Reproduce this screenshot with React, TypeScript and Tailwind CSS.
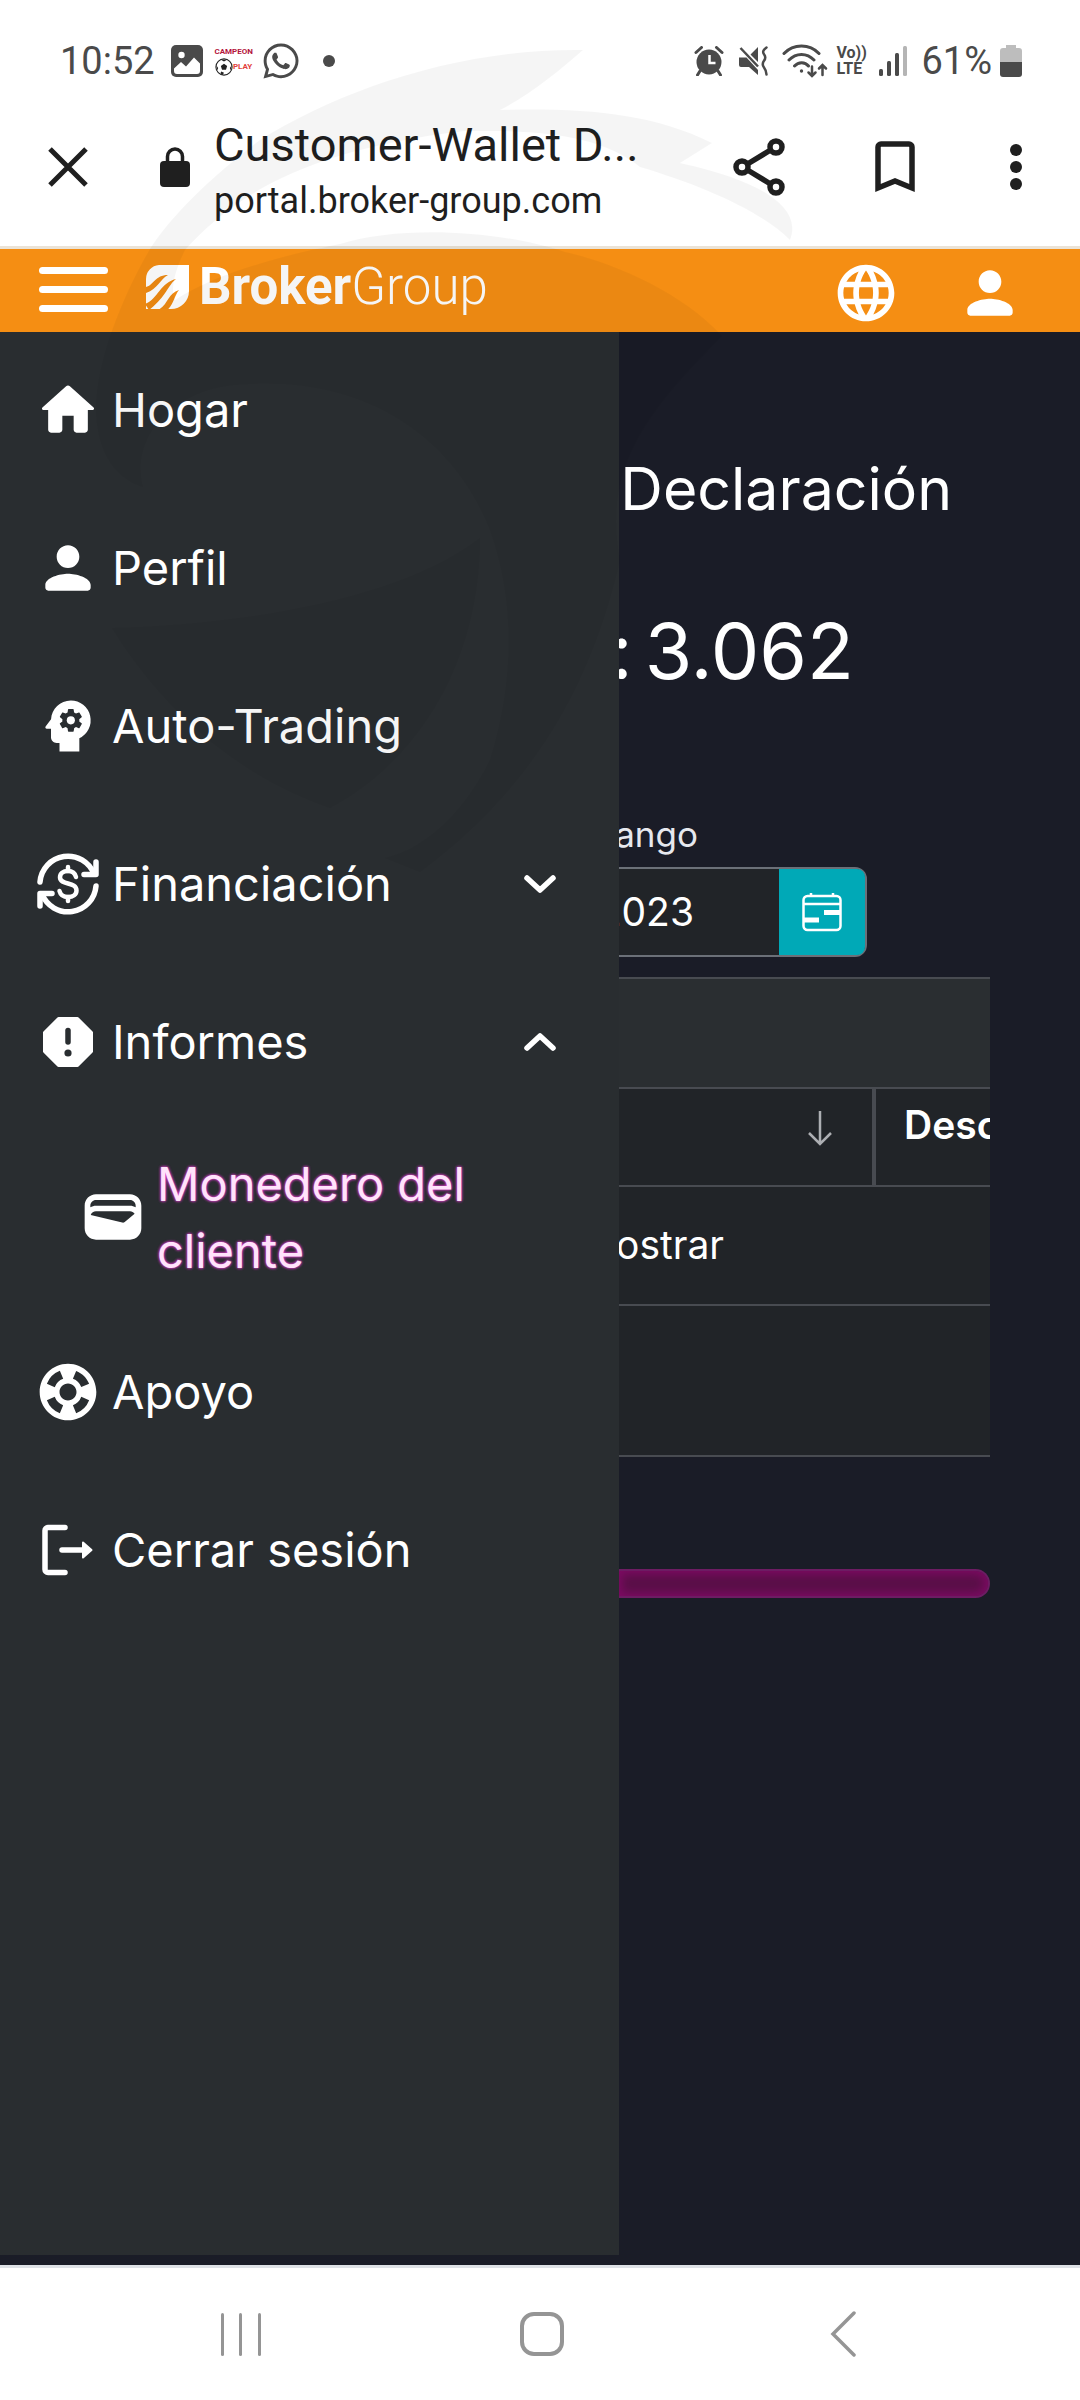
import { useState } from 'react'
import { FaWhatsapp } from 'react-icons/fa'
import { MdLanguage, MdPsychology, MdSupport, MdWallet } from 'react-icons/md'

type IconProps = { className?: string }

function HomeIcon({ className }: IconProps) {
  return (
    <svg viewBox="0 0 24 24" fill="currentColor" className={className}>
      <path d="M10 19v-5h4v5c0 .55.45 1 1 1h3c.55 0 1-.45 1-1v-7h1.7c.46 0 .68-.57.33-.87L12.67 3.6c-.38-.34-.96-.34-1.34 0l-8.36 7.53c-.34.3-.13.87.33.87H5v7c0 .55.45 1 1 1h3c.55 0 1-.45 1-1z" />
    </svg>
  )
}

function PersonIcon({ className }: IconProps) {
  return (
    <svg viewBox="0 0 24 24" fill="currentColor" className={className}>
      <path d="M12 12c2.21 0 4-1.79 4-4s-1.79-4-4-4-4 1.79-4 4 1.79 4 4 4zm0 2c-2.67 0-8 1.34-8 4v1c0 .55.45 1 1 1h14c.55 0 1-.45 1-1v-1c0-2.66-5.33-4-8-4z" />
    </svg>
  )
}

function FundingIcon({ className }: IconProps) {
  return (
    <svg viewBox="0 0 68 68" fill="none" stroke="currentColor" strokeWidth="5.5" strokeLinecap="round" strokeLinejoin="round" className={className}>
      <path d="M6 32A28 28 0 0 1 60 24" />
      <path d="M62 12v12.500H50" />
      <path d="M62 36A28 28 0 0 1 8 44" />
      <path d="M6 56V43.500H18" />
      <path d="M42 27c-1-4-4-6-8-6-5 0-8 2.500-8 6.300C26 36 42.500 31 42.500 40.500c0 4-3.500 6.500-8.500 6.500-4.500 0-7.500-2-8.500-6" strokeWidth="4.500" />
      <path d="M34 17v4M34 47v4" strokeWidth="4.500" />
    </svg>
  )
}

function ReportIcon({ className }: IconProps) {
  return (
    <svg viewBox="0 0 68 68" className={className}>
      <path d="M24.500 10.500h19L57.500 24.500v19L43.500 57.500h-19L10.500 43.500v-19z" fill="currentColor" stroke="currentColor" strokeWidth="3" strokeLinejoin="round" />
      <path d="M34 22.500v11.500" stroke="#292d30" strokeWidth="5.500" strokeLinecap="round" />
      <circle cx="34" cy="45" r="3.600" fill="#292d30" />
    </svg>
  )
}

function LogoutIcon({ className }: IconProps) {
  return (
    <svg viewBox="0 0 68 68" fill="none" stroke="currentColor" strokeWidth="5.500" strokeLinecap="round" strokeLinejoin="round" className={className}>
      <path d="M31 11.500H14a3 3 0 0 0-3 3v39a3 3 0 0 0 3 3h17" />
      <path d="M28 34h22" />
      <path d="M49 26.500 57.500 34 49 41.500z" fill="currentColor" strokeWidth="2" />
    </svg>
  )
}

function Chevron({ up }: { up: boolean }) {
  return (
    <svg viewBox="0 0 34 20" fill="none" stroke="currentColor" strokeWidth="5.500" strokeLinecap="round" strokeLinejoin="round" className="h-5 w-[34px]">
      <path d={up ? 'M4 16 17 4l13 12' : 'M4 4l13 12L30 4'} />
    </svg>
  )
}

function StatusBar() {
  return (
    <div className="flex h-[110px] items-center justify-between bg-white pt-3 pl-[60px] pr-[58px] text-[#4a4a4a]">
      <div className="flex items-center">
        <span className="text-[38px] leading-10">10:52</span>
        <svg viewBox="0 0 32 32" className="ml-4 size-8">
          <rect width="32" height="32" rx="5" fill="#4a4a4a" />
          <path d="M3 23.500 10 17l5 4.500 8-9 6 6V26a3 3 0 0 1-3 3H6a3 3 0 0 1-3-3z" fill="#fff" />
          <circle cx="10.500" cy="10" r="3.200" fill="#fff" />
        </svg>
        <div className="ml-3 flex w-[38px] flex-col items-center text-[8px] leading-3 font-bold">
          <span className="text-[#b3143c]">CAMPEON</span>
          <div className="flex items-center">
            <svg viewBox="0 0 20 20" className="size-[18px] shrink-0">
              <circle cx="10" cy="10" r="9" fill="#fff" stroke="#222" strokeWidth="1.200" />
              <path d="M10 6.500 13.500 9l-1.300 4H7.800L6.500 9zM6.500 2 10 4l3.500-2zM1.500 8 3.500 11 2.500 14zM18.500 8 16.500 11l1 3zM6 17l1-2 3 1.500L8.500 19z" fill="#222" />
            </svg>
            <span className="text-[#e2413c]">PLAY</span>
          </div>
        </div>
        <FaWhatsapp className="ml-2 size-10" />
        <span className="ml-[22px] size-3 rounded-full bg-[#4a4a4a]" />
      </div>

      <div className="flex items-center">
        <svg viewBox="0 0 30 30" className="size-[30px]">
          <circle cx="15" cy="16" r="12.500" fill="#4a4a4a" />
          <path d="M2 6.500 7.500 1.500M28 6.500 22.500 1.500M6 25l-2.500 4M24 25l2.500 4" stroke="#4a4a4a" strokeWidth="3" strokeLinecap="round" />
          <path d="M15.500 9v8h6" fill="none" stroke="#fff" strokeWidth="2.500" />
        </svg>
        <svg viewBox="0 0 30 30" className="ml-[14px] size-[30px]" fill="#4a4a4a">
          <path d="M20 1v15L12.500 8.500zM1 11.500h7.500L20 24v5l-9-8H3a2 2 0 0 1-2-2z" />
          <path d="M2.500 2 20 20.500" stroke="#4a4a4a" strokeWidth="2.500" />
          <path d="M28.500 1.500q-5 3.500-2.500 6.700t0 6.600 0 6.600 2.500 7.100" fill="none" stroke="#4a4a4a" strokeWidth="2.500" strokeLinecap="round" />
        </svg>
        <svg viewBox="0 0 46 34" fill="none" stroke="#4a4a4a" strokeWidth="3" strokeLinecap="round" className="ml-[14px] h-[34px] w-[46px]">
          <path d="M2 9.500c9.500-10 25.500-10 35 0M7 16c7-7.500 18-7.500 25 0M12.500 22c4-4.500 10.500-4.500 14 0" />
          <circle cx="19.500" cy="27" r="1.700" fill="#4a4a4a" stroke="none" />
          <path d="M30 22.500v9M26.500 28.500l3.500 3.500 3.500-3.500M40.500 31v-9M37 24.500l3.500-3.500 3.500 3.500" strokeWidth="2.500" />
        </svg>
        <div className="ml-2 flex w-[30px] flex-col text-[16px] leading-4 font-bold">
          <span>Vo))</span>
          <span>LTE</span>
        </div>
        <svg viewBox="0 0 28 30" className="ml-[13px] h-[30px] w-7" fill="#4a4a4a">
          <rect x="0" y="23" width="4" height="7" rx="1.500" />
          <rect x="8" y="15" width="4" height="15" rx="1.500" />
          <rect x="16" y="7" width="4" height="23" rx="1.500" />
          <rect x="24" y="0" width="4" height="30" rx="1.500" fill="#b5b5b5" />
        </svg>
        <span className="ml-[14px] text-[38px] leading-10">61%</span>
        <svg viewBox="0 0 22 32" className="ml-2 h-8 w-[22px]">
          <path d="M6 0h10v3h3a3 3 0 0 1 3 3v11H0V6a3 3 0 0 1 3-3h3z" fill="#bdbdbd" />
          <path d="M0 17h22v12a3 3 0 0 1-3 3H3a3 3 0 0 1-3-3z" fill="#4a4a4a" />
        </svg>
      </div>
    </div>
  )
}

function BrowserBar() {
  return (
    <div className="flex h-[139px] items-center border-b-[3px] border-[#ebe3d6] bg-white pb-[22px] pl-12 pr-[58px] text-[#1f1f1f]">
      <button aria-label="Cerrar">
        <svg viewBox="0 0 40 40" className="size-10" stroke="currentColor" strokeWidth="5">
          <path d="M2 2 38 38M38 2 2 38" />
        </svg>
      </button>
      <svg viewBox="0 0 30 40" className="ml-[72px] h-10 w-[30px]">
        <rect y="14" width="30" height="26" rx="4" fill="currentColor" />
        <path d="M7.500 15V9.500a7.500 7.500 0 0 1 15 0V15" fill="none" stroke="currentColor" strokeWidth="3.500" />
      </svg>
      <div className="ml-6 flex flex-1 flex-col gap-[6px] pt-[6px] whitespace-nowrap">
        <span className="text-[47px] leading-14">Customer-Wallet D...</span>
        <span className="text-[36px] leading-11">portal.broker-group.com</span>
      </div>
      <button aria-label="Compartir">
        <svg viewBox="0 0 52 58" fill="none" stroke="currentColor" strokeWidth="5.500" className="h-[58px] w-[52px]">
          <circle cx="43" cy="9" r="6" />
          <circle cx="9" cy="29" r="6" />
          <circle cx="43" cy="49" r="6" />
          <path d="M14.500 26 37.500 12M14.500 32 37.500 46" />
        </svg>
      </button>
      <button aria-label="Marcador" className="ml-[90px]">
        <svg viewBox="0 0 40 52" fill="none" stroke="currentColor" strokeWidth="5.500" className="h-[52px] w-10">
          <path d="M3 47V6a3 3 0 0 1 3-3h28a3 3 0 0 1 3 3v41L20 40z" />
        </svg>
      </button>
      <button aria-label="Más opciones" className="ml-[95px] flex flex-col gap-[5px]">
        <span className="size-3 rounded-full bg-current" />
        <span className="size-3 rounded-full bg-current" />
        <span className="size-3 rounded-full bg-current" />
      </button>
    </div>
  )
}

function Header({ onToggle }: { onToggle: () => void }) {
  return (
    <header className="flex h-[83px] items-center bg-[#f58e13] pl-[39px] pr-14 text-white">
      <button aria-label="Menú" onClick={onToggle} className="flex w-[69px] flex-col gap-3 pb-[2px]">
        <span className="h-[7px] rounded-full bg-white" />
        <span className="h-[7px] rounded-full bg-white" />
        <span className="h-[7px] rounded-full bg-white" />
      </button>
      <a href="#" className="ml-[38px] flex items-center pb-2">
        <svg viewBox="0 0 43 44" className="h-11 w-[43px]">
          <path d="M13 0h30v26a18 18 0 0 1-18 18H0V14A14 14 0 0 1 13 0z" fill="#fff" />
          <path d="M0 22C8 20 9 10 22 10 14 14 12 24 0 28zM-1 39C12 34 14 18 30 14 22 20 20 32 3 45zM12 45C22 40 22 28 33 25 28 31 28 40 20 46z" fill="#f08b13" />
        </svg>
        <span className="ml-[10px] text-[51px] leading-14 font-bold">
          Broker<span className="font-light">Group</span>
        </span>
      </a>
      <div className="ml-auto flex items-center gap-14 pt-[5px]">
        <button aria-label="Idioma">
          <MdLanguage className="size-[68px]" />
        </button>
        <button aria-label="Cuenta">
          <PersonIcon className="size-[68px]" />
        </button>
      </div>
    </header>
  )
}

const menu = [
  { label: 'Hogar', icon: HomeIcon },
  { label: 'Perfil', icon: PersonIcon },
  { label: 'Auto-Trading', icon: MdPsychology },
  { label: 'Financiación', icon: FundingIcon, group: true },
  { label: 'Informes', icon: ReportIcon, group: true, children: [{ label: 'Monedero del cliente', icon: MdWallet }] },
  { label: 'Apoyo', icon: MdSupport },
  { label: 'Cerrar sesión', icon: LogoutIcon },
]

function Sidebar() {
  const [expanded, setExpanded] = useState('Informes')

  return (
    <aside className="w-[619px] shrink-0 bg-[#292d30] text-white">
      <nav className="flex flex-col text-[47px] leading-[67px]">
        {menu.map(({ label, icon: Icon, group, children }) => (
          <div key={label}>
            {group ? (
              <button
                onClick={() => setExpanded(expanded === label ? '' : label)}
                className="flex h-[158px] w-full items-center pb-[3px] pl-[34px] pr-[62px]"
              >
                <Icon className="size-[68px]" />
                <span className="ml-[10px]">{label}</span>
                <span className="ml-auto">
                  <Chevron up={expanded === label} />
                </span>
              </button>
            ) : (
              <a href="#" className="flex h-[158px] items-center pb-[3px] pl-[34px]">
                <Icon className="size-[68px]" />
                <span className="ml-[10px]">{label}</span>
              </a>
            )}
            {expanded === label &&
              children?.map(({ label: childLabel, icon: ChildIcon }) => (
                <a key={childLabel} href="#" className="flex h-[192px] items-center pb-[3px] pl-[79px] pr-28">
                  <ChildIcon className="size-[68px] shrink-0" />
                  <span className="ml-[10px] text-[#ffe3fb] [text-shadow:0_0_3px_#e23fd0,0_0_3px_#c531b6]">{childLabel}</span>
                </a>
              ))}
          </div>
        ))}
      </nav>
    </aside>
  )
}

function WalletStatement() {
  return (
    <main className="min-w-0 flex-1 overflow-hidden pt-[117px] pr-[90px] text-white">
      <h1 className="flex justify-end pr-[38px] text-[59px] leading-[80px]">Declaración</h1>
      <p className="mt-20 flex justify-end gap-3 pr-[136px] text-[77px] leading-[84px] whitespace-nowrap">
        <span>:</span>
        <span>3.062</span>
      </p>

      <div className="mt-[113px] flex flex-col items-end pr-[123px]">
        <label htmlFor="range" className="pr-[169px] text-[35px] leading-[56px] text-[#e6e8ee]">
          Rango
        </label>
        <div className="mt-[5px] flex h-[90px] w-[420px] rounded-r-xl border-2 border-[#6b7078]">
          <input
            id="range"
            defaultValue="01/01/2023"
            className="min-w-0 flex-1 bg-[#212428] pr-[85px] text-right text-[39px] outline-none"
          />
          <button aria-label="Abrir calendario" className="flex w-[86px] items-center justify-center rounded-r-lg bg-[#00a9b7]">
            <svg viewBox="0 0 40 40" fill="none" stroke="#fff" strokeWidth="2.500" className="size-10">
              <rect x="1.500" y="4" width="37" height="34" rx="4" />
              <path d="M1.500 12h37M9 1v4M31 1v4" />
              <path d="M22 20.500h16M2 28h15" strokeWidth="5" />
            </svg>
          </button>
        </div>
      </div>

      <section className="mt-5 overflow-hidden border-y-2 border-[#484b51]">
        <div className="h-[108px] bg-[#2a2e31]" />
        <table className="w-[560px] table-fixed border-collapse bg-[#212428] text-left text-[39px]">
          <thead>
            <tr className="h-[98px] border-y-2 border-[#484b51] align-top">
              <th className="w-[255px] border-r-4 border-[#484b51]">
                <svg viewBox="0 0 24 36" fill="none" stroke="#adafb3" strokeWidth="2.500" className="mt-[21px] mr-10 ml-auto h-9 w-6">
                  <path d="M12 1v33M1 23l11 11 11-11" />
                </svg>
              </th>
              <th className="overflow-hidden pt-[6px] pl-7 leading-[60px] font-semibold">Descripción</th>
            </tr>
          </thead>
          <tbody>
            <tr className="h-[119px] border-b-2 border-[#484b51]">
              <td colSpan={2}>
                <span className="flex w-[105px] justify-end">mostrar</span>
              </td>
            </tr>
          </tbody>
        </table>
        <div className="h-[149px] bg-[#212428]" />
      </section>

      <div className="mt-28 h-[29px] rounded-r-full border-2 border-l-0 border-[#6d1c63] bg-[#5a0f48] shadow-[inset_0_0_10px_3px_#7d0a63]" />
    </main>
  )
}

function NavigationBar() {
  return (
    <div className="grid h-[135px] grid-cols-3 items-center justify-items-center border-t-[3px] border-[#dde1e6] bg-white pr-[86px] pl-[90px]">
      <button aria-label="Recientes" className="flex w-10 justify-between">
        <span className="h-[43px] w-[3px] rounded-full bg-[#959595]" />
        <span className="h-[43px] w-[3px] rounded-full bg-[#959595]" />
        <span className="h-[43px] w-[3px] rounded-full bg-[#959595]" />
      </button>
      <button aria-label="Inicio" className="size-11 rounded-[14px] border-4 border-[#959595]" />
      <button aria-label="Atrás">
        <svg viewBox="0 0 26 46" fill="none" stroke="#959595" strokeWidth="3.500" strokeLinecap="round" className="h-[46px] w-[26px]">
          <path d="M24 2 3 23l21 21" />
        </svg>
      </button>
    </div>
  )
}

function Watermark() {
  return (
    <svg viewBox="0 0 1080 1000" fill="#000" fillOpacity="0.04" className="pointer-events-none absolute inset-x-0 top-0 w-full">
      <path d="M583 50C460 48 340 90 260 140 200 185 165 225 150 249 120 300 88 380 98 430 103 460 120 480 143 487 130 440 170 385 250 384 370 378 455 440 490 530 515 600 515 680 490 760 460 820 420 850 385 858L420 872C530 790 590 690 620 560 600 460 660 400 722 336 680 290 610 262 565 252 500 230 400 225 340 244 300 252 220 270 175 300 170 290 175 270 185 250 230 200 300 150 465 131 540 130 600 135 640 167 700 185 760 210 790 240 800 215 780 185 680 163L712 143C650 112 580 108 500 110 530 95 560 70 583 50z" />
      <path d="M480 538C400 600 240 625 112 628 150 690 220 770 330 808 420 760 480 660 480 538z" />
    </svg>
  )
}

export default function App() {
  const [menuOpen, setMenuOpen] = useState(true)

  return (
    <div className="relative flex min-h-screen flex-col bg-[#1a1c27] font-['Roboto',sans-serif]">
      <StatusBar />
      <BrowserBar />
      <Header onToggle={() => setMenuOpen(!menuOpen)} />
      <div className="flex flex-1 pb-[10px] font-['Inter',sans-serif]">
        {menuOpen && <Sidebar />}
        <WalletStatement />
      </div>
      <NavigationBar />
      <Watermark />
    </div>
  )
}
